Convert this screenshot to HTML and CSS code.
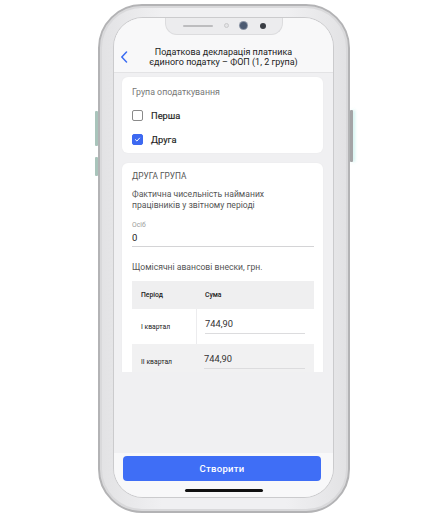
FILE: index.html
```html
<!DOCTYPE html>
<html lang="uk">
<head>
    <meta charset="UTF-8">
    <meta name="viewport" content="width=device-width, initial-scale=1.0">
    <title>Податкова декларація</title>
    <link rel="stylesheet" href="styles.css">
</head>
<body>
    <div class="phone">
        <span class="side-btn side-left-1"></span>
        <span class="side-btn side-left-2"></span>
        <span class="side-btn side-right"></span>

        <div class="screen">
            <!-- виріз з камерою -->
            <div class="notch">
                <span class="speaker"></span>
                <span class="sensor"></span>
                <span class="camera"></span>
                <span class="lens"></span>
            </div>

            <div class="status">
                <span class="status-dots"><i></i><i></i><i></i></span>
            </div>

            <header class="nav">
                <span class="nav-back">
                    <svg width="8" height="12" viewBox="0 0 8 12">
                        <path d="M6.5 1 L1.8 6 L6.5 11" fill="none" stroke="#3b6cf2" stroke-width="1.5" stroke-linecap="round" stroke-linejoin="round"/>
                    </svg>
                </span>
                <h1 class="nav-title">Податкова декларація платника<br>єдиного податку – ФОП (1, 2 група)</h1>
                <span></span>
            </header>

            <div class="scroll">
                <section class="card card-group">
                    <p class="card-label">Група оподаткування</p>
                    <label class="check-row">
                        <span class="checkbox"></span>
                        <span class="check-text">Перша</span>
                    </label>
                    <label class="check-row">
                        <span class="checkbox checked">
                            <svg width="11" height="11" viewBox="0 0 11 11">
                                <path d="M3 5.7 L4.8 7.4 L8 3.8" fill="none" stroke="#fff" stroke-width="1.2" stroke-linecap="round" stroke-linejoin="round"/>
                            </svg>
                        </span>
                        <span class="check-text">Друга</span>
                    </label>
                </section>

                <section class="card card-second">
                    <h2 class="section-title">Друга група</h2>
                    <p class="field-desc">Фактична чисельність найманих<br>працівників у звітному періоді</p>
                    <div class="field">
                        <span class="field-hint">Осіб</span>
                        <div class="field-value">0</div>
                    </div>
                    <p class="field-desc advance">Щомісячні авансові внески, грн.</p>

                    <div class="table">
                        <div class="table-row table-head">
                            <div class="cell cell-period">Період</div>
                            <div class="cell cell-sum">Сума</div>
                        </div>
                        <div class="table-row row-white">
                            <div class="cell cell-period">І квартал</div>
                            <div class="cell cell-sum"><div class="sum-input">744,90</div></div>
                        </div>
                        <div class="table-row row-gray">
                            <div class="cell cell-period">ІІ квартал</div>
                            <div class="cell cell-sum"><div class="sum-input">744,90</div></div>
                        </div>
                    </div>
                </section>
            </div>

            <div class="filler"></div>

            <footer class="footer">
                <button class="create-btn">Створити</button>
                <div class="home-bar"></div>
            </footer>
        </div>
    </div>
</body>
</html>
```

FILE: styles.css
```css
* {
    margin: 0;
    padding: 0;
    box-sizing: border-box;
}

body {
    font-family: Roboto, 'Liberation Sans', sans-serif;
    background: #ffffff;
    width: 448px;
    height: 518px;
    overflow: hidden;
    display: flex;
    justify-content: center;
    padding-top: 4px;
    color: #222;
}

/* корпус телефону */
.phone {
    position: relative;
    width: 252px;
    height: 509px;
    border: 2px solid #b3b3b5;
    border-radius: 44px;
    background: linear-gradient(90deg, #e2e2e4, #f0f0f2 25%, #f0f0f2 75%, #e2e2e4);
    box-shadow: inset 0 0 0 2px #d9d9db;
    padding: 11px 14px 13px 13px;
}

.side-btn {
    position: absolute;
    width: 3px;
    border-radius: 1px;
}

.side-left-1 {
    left: -5px;
    top: 105px;
    height: 35px;
    background: #a9c4bb;
}

.side-left-2 {
    left: -5px;
    top: 151px;
    height: 19px;
    background: #a9c4bb;
}

.side-right {
    right: -5px;
    top: 104px;
    height: 52px;
    background: #a4a4a6;
    box-shadow: 2px 0 3px rgba(120, 220, 210, 0.35);
}

.screen {
    position: relative;
    height: 100%;
    border: 1px solid #cbcbcd;
    border-radius: 30px;
    overflow: hidden;
    background: #f0f0f2;
    display: flex;
    flex-direction: column;
}

.notch {
    position: absolute;
    z-index: 2;
    top: 0;
    left: 50%;
    transform: translateX(-50%);
    width: 118px;
    height: 17px;
    background: #ececee;
    border: 1px solid #dcdcde;
    border-top: none;
    border-radius: 0 0 12px 12px;
    display: flex;
    align-items: center;
    padding-left: 17px;
    padding-bottom: 1px;
}

.speaker {
    width: 30px;
    height: 2px;
    border-radius: 1px;
    background: #bdbdbf;
}

.sensor {
    width: 5px;
    height: 5px;
    border-radius: 50%;
    border: 1px solid #c9c9cb;
    background: #e4e4e6;
    margin-left: 11px;
}

.camera {
    width: 7px;
    height: 7px;
    border-radius: 50%;
    background: #4c5b72;
    box-shadow: 0 0 0 1px #8a93a3;
    margin-left: 11px;
}

.lens {
    width: 6px;
    height: 6px;
    border-radius: 50%;
    background: #3a3d44;
    margin-left: 13px;
}

.status {
    height: 24px;
    background: #f8f8f9;
    position: relative;
}

.status-dots {
    position: absolute;
    left: 2px;
    top: 12px;
    display: flex;
    flex-direction: column;
    gap: 1px;
}

.status-dots i {
    width: 1px;
    height: 1px;
    background: #9a9a9a;
}

/* навігація */
.nav {
    height: 31px;
    background: #f8f8f9;
    border-bottom: 1px solid #e3e3e5;
    display: grid;
    grid-template-columns: 24px 1fr 24px;
    align-items: center;
    padding-bottom: 1px;
}

.nav-back {
    padding-left: 6px;
    display: flex;
    align-items: center;
}

.nav-title {
    font-size: 9px;
    font-weight: 400;
    line-height: 10px;
    text-align: center;
    color: #222;
    white-space: nowrap;
}

.scroll {
    height: 299px;
    overflow: hidden;
    padding: 4px 10px 0 8px;
}

.card {
    background: #ffffff;
    border-radius: 6px;
    box-shadow: 0 0 2px rgba(0, 0, 0, 0.04);
}

.card-group {
    height: 76px;
    padding: 10px 10px 2px;
}

.card-label {
    font-size: 8.8px;
    line-height: 11px;
    color: #777;
    margin-bottom: 5px;
}

.check-row {
    height: 24px;
    display: flex;
    align-items: center;
    gap: 8px;
}

.checkbox {
    width: 11px;
    height: 11px;
    border: 1px solid #8a8a8a;
    border-radius: 2px;
    display: flex;
    align-items: center;
    justify-content: center;
}

.checkbox.checked {
    background: #3d69f1;
    border-color: #3d69f1;
}

.check-text {
    font-size: 9.3px;
    font-weight: 400;
    color: #1e1e1e;
    -webkit-text-stroke: 0.15px #1e1e1e;
}

.card-second {
    margin-top: 10px;
    padding: 8px 9px 0 10px;
    height: 240px;
}

.section-title {
    font-size: 8.3px;
    font-weight: 400;
    line-height: 10px;
    text-transform: uppercase;
    color: #555;
}

.field-desc {
    font-size: 8.6px;
    line-height: 11px;
    color: #555;
    margin-top: 8px;
}

.field {
    margin-top: 10px;
    border-bottom: 1px solid #d4d4d6;
    padding-bottom: 2px;
}

.field-hint {
    display: block;
    font-size: 6.8px;
    line-height: 9px;
    color: #9a9a9a;
}

.field-value {
    margin-top: 2px;
    font-size: 9.5px;
    line-height: 12px;
    color: #222;
}

.field-desc.advance {
    margin-top: 15px;
}

/* таблиця внесків */
.table {
    margin-top: 8px;
}

.table-row {
    display: grid;
    grid-template-columns: 64px 1fr;
}

.table-head {
    height: 28px;
    background: #efeff0;
    align-items: center;
}

.table-head .cell {
    font-size: 6.8px;
    font-weight: 500;
    color: #222;
}

.row-white,
.row-gray {
    height: 35px;
}

.row-white {
    background: #ffffff;
}

.row-white .cell-sum {
    border-left: 1px solid #ececee;
}

.row-gray {
    background: #f1f1f2;
}

.cell {
    padding-left: 9px;
}

.cell-sum {
    padding-left: 8px;
    padding-right: 9px;
}

.table-head .cell-sum {
    padding-left: 9px;
}

.row-white .cell-period,
.row-gray .cell-period {
    font-size: 6.8px;
    color: #222;
    display: flex;
    align-items: center;
}

.row-white .cell-sum,
.row-gray .cell-sum {
    padding-top: 9px;
}

.sum-input {
    font-size: 9.3px;
    line-height: 12px;
    color: #333;
    padding-bottom: 3px;
    border-bottom: 1px solid #dcdcde;
}

.filler {
    flex: 1;
}

.footer {
    background: #f8f8f9;
    padding: 3px 12px 5px 9px;
    display: flex;
    flex-direction: column;
    align-items: center;
}

.create-btn {
    width: 100%;
    height: 25px;
    border: none;
    border-radius: 4px;
    background: #3f6ef6;
    color: #ffffff;
    font-family: Roboto, 'Liberation Sans', sans-serif;
    font-size: 9.5px;
    font-weight: 500;
    letter-spacing: 0.3px;
}

.home-bar {
    width: 78px;
    height: 3px;
    border-radius: 2px;
    background: #111;
    margin-top: 8px;
    margin-left: 3px;
}
```
